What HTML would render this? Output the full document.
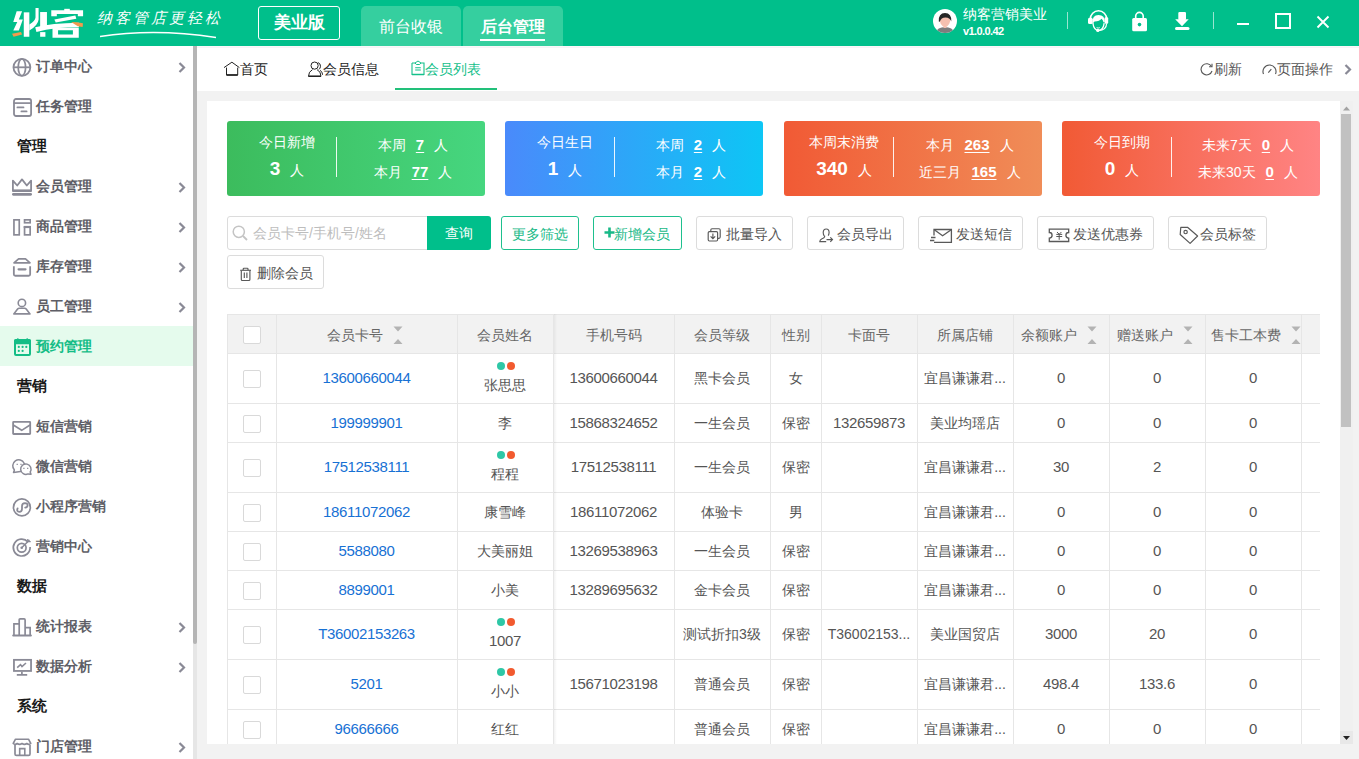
<!DOCTYPE html><html><head><meta charset="utf-8"><style>
*{box-sizing:border-box;margin:0;padding:0}
html,body{width:1359px;height:759px;overflow:hidden;background:#f2f2f2;font-family:"Liberation Sans",sans-serif;}
#root{position:relative;width:1359px;height:759px;overflow:hidden;background:#f2f2f2}
.a{position:absolute;white-space:nowrap}
.hbtn{position:absolute;left:258px;top:6px;width:82px;height:34px;border:1px solid #fff;border-radius:3px;color:#fff;font-weight:bold;font-size:17px;line-height:32px;text-align:center}
.htab{position:absolute;top:6px;height:40px;width:99px;background:#35cf9f;border-radius:5px 5px 0 0;color:#fff;font-size:16px;line-height:42px;text-align:center}
.si{position:absolute;left:0;width:193px;height:40px;font-size:14px;font-weight:bold;color:#5e5e66}
.si .t{position:absolute;left:36px;top:0;line-height:40px}
.si svg.ic{position:absolute;left:12px;top:12px;overflow:visible}
.si svg.chev{position:absolute;left:178px;top:16px}
.sec{position:absolute;left:17px;height:40px;line-height:40px;font-size:15px;font-weight:bold;color:#1a1a1a}
.tb{position:absolute;top:47px;height:45px;line-height:45px;font-size:14px;color:#333;white-space:nowrap}
.card{position:absolute;top:121px;height:75px;width:258px;border-radius:3px;color:#fff;font-size:14px}
.card .dv{position:absolute;left:109px;top:16px;width:1px;height:40px;background:rgba(255,255,255,.9)}
.card .c{position:absolute;white-space:nowrap;line-height:16px}
.card b{font-size:19px}
.card u{font-weight:bold;font-size:15px;text-decoration-thickness:1px;text-underline-offset:2px}
.btn{position:absolute;height:34px;border:1px solid #dcdcdc;border-radius:3px;font-size:14px;color:#555;line-height:32px;white-space:nowrap;background:#fff}
.btn.g{border-color:#1ec08e;color:#18b987}
.btn svg{position:absolute}
.btn span{position:absolute;top:1px}
.th{position:absolute;top:316px;height:38px;line-height:38px;font-size:14px;color:#666;text-align:center;white-space:nowrap}
.td{position:absolute;font-size:14px;color:#555;text-align:center;white-space:nowrap;line-height:16px}
.lnk{color:#1771d4}
.cb{position:absolute;left:243px;width:18px;height:18px;border:1px solid #d9d9d9;border-radius:2px;background:#fff}
.vl{position:absolute;width:1px;background:#e6e6e6}
.hl{position:absolute;height:1px;background:#e6e6e6}
.sort{position:absolute;width:10px;height:19px}
</style></head><body><div id="root"><div class="a" style="left:0;top:0;width:1359px;height:46px;background:#00bf8b"></div><svg class="a" style="left:8px;top:4px" width="84" height="38" viewBox="0 0 1359 615"><g fill="#fff">
<path d="M140 118 L228 118 L175 250 L240 250 L175 430 L85 430 L150 290 L85 290Z"/>
<rect x="255" y="135" width="90" height="395"/>
<rect x="520" y="130" width="110" height="270"/>
<rect x="520" y="455" width="85" height="75"/>
<path d="M445 65 H495 V250 Q485 345 345 430 V330 Q440 280 445 220Z"/>
<path d="M700 100 H1215 V200 H1130 V160 H790 V200 H700Z"/>
<rect x="910" y="78" width="90" height="40"/>
<path d="M750 250 L1090 188 L1105 240 L772 298Z"/>
<path d="M440 378 Q700 312 1150 305 L1150 372 Q760 372 460 452Z"/>
<path fill-rule="evenodd" d="M720 380 H1145 V548 H720Z M810 425 V492 H1050 V425Z"/>
</g><path d="M65 480 L210 455 L228 492 L90 532Z" fill="#f39a4d"/><path d="M1020 292 L1110 296 L1212 312 L1208 372 L1130 362Z" fill="#f39a4d"/></svg><div class="a" style="left:97px;top:8px;font-size:15px;color:#fff;font-family:'Liberation Serif',serif;font-style:italic;letter-spacing:3px;line-height:20px">纳客管店更轻松</div><svg class="a" style="left:95px;top:26px" width="130" height="16"><path d="M5 10.5 Q60 2 121 11.5" stroke="#fff" stroke-width="1.4" fill="none"/></svg><div class="hbtn">美业版</div><div class="htab" style="left:361px;width:100px">前台收银</div><div class="htab" style="left:463px;width:100px;font-weight:bold">后台管理</div><div class="a" style="left:480px;top:39px;width:65px;height:2px;background:#fff"></div><svg class="a" style="left:933px;top:9px" width="24" height="24" viewBox="0 0 24 24">
<defs><clipPath id="av"><circle cx="12" cy="12" r="12"/></clipPath></defs>
<circle cx="12" cy="12" r="12" fill="#fff"/>
<g clip-path="url(#av)"><ellipse cx="12" cy="23.5" rx="8.8" ry="5.5" fill="#7d7d7d"/><path d="M12 16.5 V19" stroke="#f4bcae" stroke-width="3"/><path d="M6.4 8 Q6.4 16.8 12 18.2 Q17.6 16.8 17.6 8 Z" fill="#f6c0b0"/><path d="M5.8 12.5 Q5.3 4 12 4 Q18.7 4 18.3 12.5 Q17.4 8.6 12.5 8.4 Q8 8.4 6.8 12.8 Z" fill="#262626"/></g></svg><div class="a" style="left:963px;top:6px;font-size:14px;color:#fff;line-height:17px">纳客营销美业</div><div class="a" style="left:963px;top:25px;font-size:11px;color:#fff;font-weight:bold;line-height:13px;letter-spacing:-0.6px">v1.0.0.42</div><div class="a" style="left:1067px;top:12px;width:1px;height:17px;background:rgba(255,255,255,.6)"></div><svg class="a" style="left:1088px;top:10px" width="21" height="23" viewBox="0 0 21 23">
<path d="M2.3 9 A8.2 8.2 0 0 1 18.7 9" stroke="#fff" stroke-width="1.6" fill="none"/>
<rect x="0" y="7.7" width="4.7" height="6.4" rx="1.5" fill="#fff"/><rect x="16.6" y="7.2" width="3.6" height="6.5" rx="1.2" fill="#fff"/>
<path d="M4.5 13 Q4 4.9 10.5 4.9 Q17 4.9 16.8 12 L15.6 12.6 Q14.9 9.6 13.6 8.7 Q11.6 11.2 6.6 11.6 Q5.6 12 5.1 14 Z" fill="#fff"/>
<path d="M4.9 13.2 Q5.8 20.3 10.5 20.5 Q15.2 20.3 16.2 13.2" stroke="#fff" stroke-width="1.3" fill="none"/>
<path d="M8.6 17.6 Q10.1 18.6 11.8 17.6" stroke="#fff" stroke-width="0.9" fill="none"/>
<path d="M18.6 13.5 Q18.4 20.2 10.5 20.6" stroke="#fff" stroke-width="1.2" fill="none"/><circle cx="9.8" cy="20.4" r="1.6" fill="#fff"/>
</svg><svg class="a" style="left:1131px;top:11px" width="17" height="21" viewBox="0 0 17 21">
<path d="M4.7 7.5 V5.1 A3.75 3.75 0 0 1 12.2 5.1 V7.5" stroke="#fff" stroke-width="1.6" fill="none"/>
<rect x="1.2" y="7" width="14.8" height="13.2" rx="1.5" fill="#fff"/><circle cx="8.5" cy="13.6" r="1.8" fill="#00bf8b"/></svg><svg class="a" style="left:1174px;top:11px" width="16" height="20" viewBox="0 0 16 20">
<rect x="4.3" y="0.9" width="7.7" height="8" rx="1.2" fill="#fff"/><path d="M1.2 8.3 H14.7 L8 15.2Z" fill="#fff"/>
<rect x="1" y="16" width="14.5" height="3.1" rx="1.5" fill="#fff"/></svg><div class="a" style="left:1213px;top:12px;width:1px;height:17px;background:rgba(255,255,255,.6)"></div><div class="a" style="left:1237px;top:23px;width:12px;height:2px;background:#fff"></div><div class="a" style="left:1275px;top:13px;width:16px;height:16px;border:2px solid #fff"></div><svg class="a" style="left:1316px;top:15px" width="14" height="14" viewBox="0 0 14 14"><path d="M1.5 1.5 L12.5 12.5 M12.5 1.5 L1.5 12.5" stroke="#fff" stroke-width="1.9"/></svg><div class="a" style="left:0;top:46px;width:193px;height:713px;background:#fff"></div><div class="a" style="left:193px;top:46px;width:4px;height:713px;background:#e6e6e6"></div><div class="a" style="left:193px;top:46px;width:4px;height:598px;background:#b5b5b5;border-radius:0 0 2px 2px"></div><div class="si" style="top:46px"><svg class="ic" width="21" height="20" viewBox="0 0 21 20"><circle cx="9.9" cy="9.3" r="8.45" stroke="#8a8a96" stroke-width="1.8" fill="none"/><ellipse cx="9.9" cy="9.3" rx="3.7" ry="8.45" stroke="#8a8a96" stroke-width="1.7" fill="none"/><path d="M1.5 9.3 H18.3" stroke="#8a8a96" stroke-width="1.8"/></svg><span class="t">订单中心</span><svg class="chev" width="8" height="11" viewBox="0 0 8 11"><path d="M1.5 1 L6 5.5 L1.5 10" stroke="#8a8a96" stroke-width="2.2" fill="none"/></svg></div><div class="si" style="top:86px"><svg class="ic" width="21" height="20" viewBox="0 0 21 20"><rect x="2" y="1" width="17.1" height="17" rx="2" stroke="#8a8a96" stroke-width="1.8" fill="none"/><path d="M1.5 5.1 H19.5" stroke="#8a8a96" stroke-width="1.7"/><path d="M5.4 9.4 H11.5 M9.4 13.4 H14.6" stroke="#8a8a96" stroke-width="1.8" stroke-linecap="round"/></svg><span class="t">任务管理</span></div><div class="sec" style="top:126px">管理</div><div class="si" style="top:166px"><svg class="ic" width="21" height="20" viewBox="0 0 21 20"><path d="M0.9 2.6 L5.2 7.5 L10 1.4 L14.8 7.5 L19.1 2.6 V13 H0.9Z" stroke="#8a8a96" stroke-width="1.8" fill="none" stroke-linejoin="round"/><path d="M1 12.6 H19" stroke="#8a8a96" stroke-width="2.4"/><rect x="0" y="15" width="20" height="2.7" rx="1.35" fill="#8a8a96"/></svg><span class="t">会员管理</span><svg class="chev" width="8" height="11" viewBox="0 0 8 11"><path d="M1.5 1 L6 5.5 L1.5 10" stroke="#8a8a96" stroke-width="2.2" fill="none"/></svg></div><div class="si" style="top:206px"><svg class="ic" width="21" height="20" viewBox="0 0 21 20"><rect x="1.95" y="1.85" width="5.3" height="15" stroke="#8a8a96" stroke-width="1.7" fill="none"/><rect x="12.55" y="1.85" width="5.6" height="2.9" stroke="#8a8a96" stroke-width="1.7" fill="none"/><rect x="12.55" y="9.15" width="5.6" height="7.7" stroke="#8a8a96" stroke-width="1.7" fill="none"/><path d="M11.7 9 H19" stroke="#8a8a96" stroke-width="2.2"/></svg><span class="t">商品管理</span><svg class="chev" width="8" height="11" viewBox="0 0 8 11"><path d="M1.5 1 L6 5.5 L1.5 10" stroke="#8a8a96" stroke-width="2.2" fill="none"/></svg></div><div class="si" style="top:246px"><svg class="ic" width="21" height="20" viewBox="0 0 21 20"><path d="M6.6 0.9 H13.5 L18 4.8 H2Z" stroke="#8a8a96" stroke-width="1.7" fill="none" stroke-linejoin="round"/><path d="M1.85 8.3 V16.3 Q1.85 17.75 3.3 17.75 H16.7 Q18.15 17.75 18.15 16.3 V8.3" stroke="#8a8a96" stroke-width="1.8" fill="none"/><path d="M6.6 11.3 H13.5" stroke="#8a8a96" stroke-width="2.2" stroke-linecap="round"/></svg><span class="t">库存管理</span><svg class="chev" width="8" height="11" viewBox="0 0 8 11"><path d="M1.5 1 L6 5.5 L1.5 10" stroke="#8a8a96" stroke-width="2.2" fill="none"/></svg></div><div class="si" style="top:286px"><svg class="ic" width="21" height="20" viewBox="0 0 21 20"><circle cx="9.9" cy="4.9" r="3.7" stroke="#8a8a96" stroke-width="1.6" fill="none"/><path d="M1.8 15.9 L5.6 11 Q6.2 10.3 7.2 10.3 H12.6 Q13.6 10.3 14.2 11 L18 15.9Z" stroke="#8a8a96" stroke-width="1.6" fill="none" stroke-linejoin="round"/></svg><span class="t">员工管理</span><svg class="chev" width="8" height="11" viewBox="0 0 8 11"><path d="M1.5 1 L6 5.5 L1.5 10" stroke="#8a8a96" stroke-width="2.2" fill="none"/></svg></div><div class="si" style="top:326px;background:#e5fbed;color:#14bd86"><svg class="ic" width="21" height="20" viewBox="0 0 21 20"><rect x="3" y="2" width="15" height="15" rx="1" stroke="#14bd86" stroke-width="2" fill="none"/><rect x="2" y="1.3" width="17" height="5" rx="1.5" fill="#14bd86"/><circle cx="5.8" cy="1.2" r="1" fill="#14bd86"/><circle cx="15.2" cy="1.2" r="1" fill="#14bd86"/><g fill="#14bd86"><circle cx="6.8" cy="8.9" r="1.1"/><circle cx="10.6" cy="8.9" r="1.1"/><circle cx="14.3" cy="8.9" r="1.1"/><circle cx="6.8" cy="12.9" r="1.1"/><circle cx="10.6" cy="12.9" r="1.1"/></g></svg><span class="t">预约管理</span></div><div class="sec" style="top:366px">营销</div><div class="si" style="top:406px"><svg class="ic" width="21" height="20" viewBox="0 0 21 20"><rect x="1.1" y="3.9" width="17.1" height="12.1" rx="0.5" stroke="#8a8a96" stroke-width="1.8" fill="none"/><path d="M1.3 7 L9.7 12.3 L18 7" stroke="#8a8a96" stroke-width="1.6" fill="none"/></svg><span class="t">短信营销</span></div><div class="si" style="top:446px"><svg class="ic" width="21" height="20" viewBox="0 0 21 20"><path d="M1.5 14.5 L2.4 12 A6 6 0 1 1 8.5 13.6 Z" stroke="#8a8a96" stroke-width="1.5" fill="none" stroke-linejoin="round"/><path d="M19 16.2 L18.2 14 A5.2 5.2 0 1 0 16 15.9 Z" stroke="#8a8a96" stroke-width="1.5" fill="#fff" stroke-linejoin="round"/><path d="M4.6 6.4 H5.8 M8.4 6.4 H9.6 M11.3 10.3 H12.5 M15.1 10.3 H16.3" stroke="#8a8a96" stroke-width="1.2"/></svg><span class="t">微信营销</span></div><div class="si" style="top:486px"><svg class="ic" width="21" height="20" viewBox="0 0 21 20"><circle cx="9.9" cy="9.4" r="8.45" stroke="#8a8a96" stroke-width="1.7" fill="none"/><path d="M5.6 10.4 Q4.3 13.8 7.3 13.9 Q10 13.9 10 10.8 V8.3 Q10 5.3 13 5.2 Q15.6 5.2 15.6 7.2 Q15.6 9.2 13.2 9.6" stroke="#8a8a96" stroke-width="1.8" fill="none" stroke-linecap="round"/></svg><span class="t">小程序营销</span></div><div class="si" style="top:526px"><svg class="ic" width="21" height="20" viewBox="0 0 21 20"><path d="M16 4 A8.4 8.4 0 1 0 18.1 9" stroke="#8a8a96" stroke-width="1.7" fill="none"/><circle cx="9.7" cy="9.8" r="4.4" stroke="#8a8a96" stroke-width="1.7" fill="none"/><circle cx="9.7" cy="9.8" r="1.3" fill="#8a8a96"/><path d="M9.7 9.8 L17.5 2" stroke="#8a8a96" stroke-width="1.5"/><path d="M15.8 1 V3.7 H18.7" stroke="#8a8a96" stroke-width="1.3" fill="none"/></svg><span class="t">营销中心</span></div><div class="sec" style="top:566px">数据</div><div class="si" style="top:606px"><svg class="ic" width="21" height="20" viewBox="0 0 21 20"><path d="M1.95 17.4 V5.8 H7.2 V17.4 M7.2 17.4 V1.9 Q7.2 0.9 8.2 0.9 H12.1 Q13.1 0.9 13.1 1.9 V17.4 M13.1 9.7 H18.15 V17.4" stroke="#8a8a96" stroke-width="1.7" fill="none"/><path d="M1.2 17.6 H18.9" stroke="#8a8a96" stroke-width="2" stroke-linecap="round"/></svg><span class="t">统计报表</span><svg class="chev" width="8" height="11" viewBox="0 0 8 11"><path d="M1.5 1 L6 5.5 L1.5 10" stroke="#8a8a96" stroke-width="2.2" fill="none"/></svg></div><div class="si" style="top:646px"><svg class="ic" width="21" height="20" viewBox="0 0 21 20"><rect x="1.95" y="1.85" width="17.1" height="11.1" stroke="#8a8a96" stroke-width="1.8" fill="none"/><path d="M9.9 13.8 V16.5 M4.8 16.9 H15.2" stroke="#8a8a96" stroke-width="1.7" fill="none"/><path d="M5.2 9.7 L8.5 6.6 L10 8.5 L14 5" stroke="#8a8a96" stroke-width="1.6" fill="none"/></svg><span class="t">数据分析</span><svg class="chev" width="8" height="11" viewBox="0 0 8 11"><path d="M1.5 1 L6 5.5 L1.5 10" stroke="#8a8a96" stroke-width="2.2" fill="none"/></svg></div><div class="sec" style="top:686px">系统</div><div class="si" style="top:726px"><svg class="ic" width="21" height="20" viewBox="0 0 21 20"><path d="M1.2 5.5 L3.5 1.2 H16.5 L18.8 5.5 Q17 7.2 14.8 5.5 Q12.4 7.2 10 5.5 Q7.6 7.2 5.2 5.5 Q3 7.2 1.2 5.5Z" stroke="#8a8a96" stroke-width="1.6" fill="none" stroke-linejoin="round"/><path d="M3 7 V16 Q3 17.4 4.4 17.4 H16.6 Q18 17.4 18 16 V7" stroke="#8a8a96" stroke-width="1.7" fill="none"/><path d="M7.7 17.4 V10.6 H12.8 V17.4" stroke="#8a8a96" stroke-width="1.6" fill="none"/></svg><span class="t">门店管理</span><svg class="chev" width="8" height="11" viewBox="0 0 8 11"><path d="M1.5 1 L6 5.5 L1.5 10" stroke="#8a8a96" stroke-width="2.2" fill="none"/></svg></div><div class="a" style="left:197px;top:46px;width:10px;height:713px;background:#f2f2f2"></div><div class="a" style="left:197px;top:46px;width:1162px;height:45px;background:#fff"></div><div class="a" style="left:197px;top:46px;width:1162px;height:2px;background:linear-gradient(#fcf8fb,#f4f4f4)"></div><svg class="a" style="left:223px;top:61px" width="17" height="16" viewBox="0 0 17 16" fill="none" stroke="#222" stroke-width="1"><path d="M1 6.6 L8.9 1.2 L16.4 6.6"/><path d="M3.5 6.6 V14 H14.7 V6.6"/><path d="M3.5 14 H14.7" stroke-width="1.6"/></svg><div class="tb" style="left:240px;color:#222">首页</div><svg class="a" style="left:307px;top:61px" width="17" height="16" viewBox="0 0 17 16" fill="none" stroke="#222" stroke-width="1"><circle cx="7.6" cy="4.6" r="3.6"/><path d="M5.5 8.6 Q1.5 10.6 1.5 15.3 H14 Q14 10.6 10 8.6"/><path d="M15.6 13.8 Q15.6 10.8 13 9.3 M11 1.6 Q13.5 2.3 13.5 5.3 Q13.3 7.5 11.8 8.5"/><path d="M1.5 15.3 H14" stroke-width="1.5"/></svg><div class="tb" style="left:323px;color:#222">会员信息</div><svg class="a" style="left:411px;top:60px" width="14" height="16" viewBox="0 0 14 16" fill="none" stroke="#14c08a" stroke-width="1.1"><path d="M1 3 V14.5 H13 V3 H10 M4 3 H1"/><path d="M4 3 L7 1 L10 3 L8.6 4.5 H5.4Z" stroke-width="1"/><path d="M4.2 7.8 H9.8 M4.2 10 H9.8"/><path d="M1 14.5 H13" stroke-width="1.5"/></svg><div class="tb" style="left:425px;color:#14c08a">会员列表</div><div class="a" style="left:395px;top:88px;width:102px;height:2px;background:#22c07a"></div><svg class="a" style="left:1200px;top:63px" width="14" height="13" viewBox="0 0 14 13"><path d="M11.5 3.5 A5.6 5.6 0 1 0 12 8" stroke="#555" stroke-width="1.1" fill="none"/><path d="M9 3.8 H12 V0.8" stroke="#555" stroke-width="1.1" fill="none"/></svg><div class="tb" style="left:1214px;color:#555">刷新</div><svg class="a" style="left:1262px;top:62px" width="15" height="14" viewBox="0 0 15 14" fill="none" stroke="#555" stroke-width="1.1"><path d="M1.5 12 A6.5 6.5 0 1 1 13.5 12"/><path d="M6.3 10.6 L9.3 7.2"/></svg><div class="tb" style="left:1277px;color:#555">页面操作</div><svg class="a" style="left:1344px;top:64px" width="8" height="11" viewBox="0 0 8 11"><path d="M1.5 1 L6 5.5 L1.5 10" stroke="#8a8a96" stroke-width="2.2" fill="none"/></svg><div class="a" style="left:207px;top:101px;width:1133px;height:643px;background:#fff"></div><div class="a" style="left:1340px;top:101px;width:13px;height:643px;background:#f0f0f0"></div><div class="a" style="left:1341px;top:114px;width:10px;height:313px;background:#c1c1c1"></div><svg class="a" style="left:1340px;top:101px" width="13" height="13"><path d="M3 9.5 L6.5 5.5 L10 9.5Z" fill="#a3a3a3"/></svg><div class="a" style="left:1340px;top:731px;width:13px;height:13px;background:#e8e8e8"></div><svg class="a" style="left:1340px;top:731px" width="13" height="13"><path d="M3 5 L6.5 9 L10 5Z" fill="#222"/></svg><div class="card" style="left:227px;background:linear-gradient(90deg,#3cbc5d,#46d67f)"><div class="c" style="left:0;width:120px;text-align:center;top:13px">今日新增</div><div class="c" style="left:0;width:120px;text-align:center;top:38px;line-height:20px"><b>3</b><span style="margin-left:10px">人</span></div><div class="dv"></div><div class="c" style="left:110px;width:152px;text-align:center;top:16px">本周<u style="margin-left:10px">7</u><span style="margin-left:10px">人</span></div><div class="c" style="left:110px;width:152px;text-align:center;top:43px">本月<u style="margin-left:10px">77</u><span style="margin-left:10px">人</span></div></div><div class="card" style="left:505px;background:linear-gradient(90deg,#4a8afb,#0dc6f5)"><div class="c" style="left:0;width:120px;text-align:center;top:13px">今日生日</div><div class="c" style="left:0;width:120px;text-align:center;top:38px;line-height:20px"><b>1</b><span style="margin-left:10px">人</span></div><div class="dv"></div><div class="c" style="left:110px;width:152px;text-align:center;top:16px">本周<u style="margin-left:10px">2</u><span style="margin-left:10px">人</span></div><div class="c" style="left:110px;width:152px;text-align:center;top:43px">本月<u style="margin-left:10px">2</u><span style="margin-left:10px">人</span></div></div><div class="card" style="left:784px;background:linear-gradient(90deg,#f15a35,#f08d58)"><div class="c" style="left:0;width:120px;text-align:center;top:13px">本周末消费</div><div class="c" style="left:0;width:120px;text-align:center;top:38px;line-height:20px"><b>340</b><span style="margin-left:10px">人</span></div><div class="dv"></div><div class="c" style="left:110px;width:152px;text-align:center;top:16px">本月<u style="margin-left:10px">263</u><span style="margin-left:10px">人</span></div><div class="c" style="left:110px;width:152px;text-align:center;top:43px">近三月<u style="margin-left:10px">165</u><span style="margin-left:10px">人</span></div></div><div class="card" style="left:1062px;background:linear-gradient(90deg,#f15a35,#ff8484)"><div class="c" style="left:0;width:120px;text-align:center;top:13px">今日到期</div><div class="c" style="left:0;width:120px;text-align:center;top:38px;line-height:20px"><b>0</b><span style="margin-left:10px">人</span></div><div class="dv"></div><div class="c" style="left:110px;width:152px;text-align:center;top:16px">未来7天<u style="margin-left:10px">0</u><span style="margin-left:10px">人</span></div><div class="c" style="left:110px;width:152px;text-align:center;top:43px">未来30天<u style="margin-left:10px">0</u><span style="margin-left:10px">人</span></div></div><div class="a" style="left:227px;top:216px;width:201px;height:34px;border:1px solid #dcdcdc;border-radius:3px 0 0 3px"></div><svg class="a" style="left:232px;top:225px" width="16" height="16" viewBox="0 0 16 16"><circle cx="6.8" cy="6.8" r="5.6" stroke="#c4c4c4" stroke-width="1.5" fill="none"/><path d="M11 11 L15 15" stroke="#c4c4c4" stroke-width="1.8"/></svg><div class="a" style="left:253px;top:216px;line-height:34px;font-size:14px;color:#bdbdbd">会员卡号/手机号/姓名</div><div class="a" style="left:427px;top:216px;width:64px;height:34px;background:#00bf8b;border-radius:0 3px 3px 0;color:#fff;font-size:14px;line-height:34px;text-align:center">查询</div><div class="btn g" style="left:501px;top:216px;width:78px"><span style="left:10px">更多筛选</span></div><div class="btn g" style="left:593px;top:216px;width:89px"><svg style="left:10px;top:10px" width="11" height="11"><path d="M5.5 0.5 V10.5 M0.5 5.5 H10.5" stroke="#18b987" stroke-width="2.6"/></svg><span style="left:20px">新增会员</span></div><div class="btn " style="left:696px;top:216px;width:97px"><svg style="left:10px;top:10px" width="16" height="16" viewBox="0 0 16 16" fill="none" stroke="#595959" stroke-width="1.15"><rect x="3.8" y="1.7" width="9.4" height="9.6" rx="1.2"/><rect x="1.2" y="4.6" width="9.4" height="9.4" rx="1.2" fill="#fff"/><path d="M5.9 6.4 V11.6 M3.6 9.3 L5.9 11.6 L8.2 9.3"/></svg><span style="left:29px">批量导入</span></div><div class="btn " style="left:807px;top:216px;width:97px"><svg style="left:10px;top:11px" width="16" height="16" viewBox="0 0 16 16" fill="none" stroke="#595959" stroke-width="1.15"><path d="M6.3 7.8 Q5.2 6.5 5.2 4.5 Q5.3 1 8.2 1 Q11.1 1 11.1 4.5 Q11 6.5 10.2 7.6"/><path d="M6.6 7.8 V8.8 Q6.3 10 4 10.8 Q1.8 11.8 1.8 13.6 H8.2"/><path d="M8.5 11.6 H14.5 M12.3 9.3 L14.5 11.6 L12.3 13.9"/></svg><span style="left:29px">会员导出</span></div><div class="btn " style="left:918px;top:216px;width:105px"><svg style="left:10px;top:11px" width="24" height="16" viewBox="0 0 24 16" fill="none" stroke="#595959" stroke-width="1.15"><path d="M5 7.5 V1.5 H22.4 V14.3 H5" stroke-width="1.3"/><path d="M5.3 1.7 L13.6 7.8 L22.2 1.7" stroke-width="1.3"/><path d="M2 9.5 H6.5 M1 12.5 H5.3" stroke-width="1.3"/></svg><span style="left:37px">发送短信</span></div><div class="btn " style="left:1037px;top:216px;width:117px"><svg style="left:10px;top:11px" width="22" height="16" viewBox="0 0 22 16" fill="none" stroke="#595959" stroke-width="1.15"><path d="M1.3 1.2 H20.7 V4.5 A2.8 2.8 0 0 0 20.7 10.1 V13.5 H1.3 V10.1 A2.8 2.8 0 0 0 1.3 4.5 Z" stroke-width="1.3"/><path d="M9 4 L11.2 6.3 L13.4 4 M8.3 6.4 H14.2 M8.3 8.5 H14.2 M11.2 6.4 V11.8" stroke-width="1"/></svg><span style="left:35px">发送优惠券</span></div><div class="btn " style="left:1168px;top:216px;width:99px"><svg style="left:10px;top:8px" width="20" height="20" viewBox="0 0 20 20" fill="none" stroke="#595959" stroke-width="1.15"><path d="M1.8 2.3 H8.5 L18.6 11 L11.1 18.4 L1.2 9.5 Z" stroke-width="1.2" stroke-linejoin="round"/><circle cx="6.6" cy="7" r="1.7"/></svg><span style="left:31px">会员标签</span></div><div class="btn " style="left:227px;top:255px;width:97px"><svg style="left:11px;top:11px" width="14" height="16" viewBox="0 0 14 16" fill="none" stroke="#595959" stroke-width="1.15"><path d="M1.2 3.3 H12"/><path d="M4.2 3 V2 Q4.2 1.2 5 1.2 H8.2 Q9 1.2 9 2 V3"/><path d="M2.3 3.8 V12.5 Q2.3 13.5 3.3 13.5 H9.9 Q10.9 13.5 10.9 12.5 V3.8"/><path d="M5.3 5.5 V11 M7.9 5.5 V11"/></svg><span style="left:29px">删除会员</span></div><div class="a" style="left:227px;top:314px;width:1093px;height:40px;background:#f2f2f2"></div><div class="hl" style="left:227px;top:314px;width:1093px"></div><div class="hl" style="left:227px;top:353px;width:1093px"></div><div class="hl" style="left:227px;top:403px;width:1093px"></div><div class="hl" style="left:227px;top:442px;width:1093px"></div><div class="hl" style="left:227px;top:492px;width:1093px"></div><div class="hl" style="left:227px;top:531px;width:1093px"></div><div class="hl" style="left:227px;top:570px;width:1093px"></div><div class="hl" style="left:227px;top:609px;width:1093px"></div><div class="hl" style="left:227px;top:659px;width:1093px"></div><div class="hl" style="left:227px;top:709px;width:1093px"></div><div class="vl" style="left:227px;top:314px;height:430px"></div><div class="vl" style="left:276px;top:314px;height:430px"></div><div class="vl" style="left:457px;top:314px;height:430px"></div><div class="vl" style="left:553px;top:314px;height:430px"></div><div class="vl" style="left:674px;top:314px;height:430px"></div><div class="vl" style="left:770px;top:314px;height:430px"></div><div class="vl" style="left:821px;top:314px;height:430px"></div><div class="vl" style="left:917px;top:314px;height:430px"></div><div class="vl" style="left:1013px;top:314px;height:430px"></div><div class="vl" style="left:1109px;top:314px;height:430px"></div><div class="vl" style="left:1205px;top:314px;height:430px"></div><div class="vl" style="left:1301px;top:314px;height:430px"></div><div class="a" style="left:554px;top:314px;width:3px;height:430px;background:linear-gradient(90deg,rgba(0,0,0,.05),rgba(0,0,0,0))"></div><div class="cb" style="top:326px"></div><div class="th" style="left:327px">会员卡号</div><svg class="sort" style="left:393px;top:326px" width="10" height="19" viewBox="0 0 10 19"><path d="M0.5 0.5 H9.5 L5 5.5Z M0.5 18 H9.5 L5 13Z" fill="#b3b3b3"/></svg><div class="th" style="left:457px;width:96px">会员姓名</div><div class="th" style="left:553px;width:121px">手机号码</div><div class="th" style="left:674px;width:96px">会员等级</div><div class="th" style="left:770px;width:51px">性别</div><div class="th" style="left:821px;width:96px">卡面号</div><div class="th" style="left:917px;width:96px">所属店铺</div><div class="th" style="left:1021px">余额账户</div><svg class="sort" style="left:1087px;top:326px" width="10" height="19" viewBox="0 0 10 19"><path d="M0.5 0.5 H9.5 L5 5.5Z M0.5 18 H9.5 L5 13Z" fill="#b3b3b3"/></svg><div class="th" style="left:1117px">赠送账户</div><svg class="sort" style="left:1183px;top:326px" width="10" height="19" viewBox="0 0 10 19"><path d="M0.5 0.5 H9.5 L5 5.5Z M0.5 18 H9.5 L5 13Z" fill="#b3b3b3"/></svg><div class="th" style="left:1211px">售卡工本费</div><svg class="sort" style="left:1291px;top:326px" width="10" height="19" viewBox="0 0 10 19"><path d="M0.5 0.5 H9.5 L5 5.5Z M0.5 18 H9.5 L5 13Z" fill="#b3b3b3"/></svg><div class="cb" style="top:370px"></div><div class="td lnk" style="left:276px;width:181px;top:370px;font-size:15px;letter-spacing:-0.35px">13600660044</div><div class="a" style="left:497px;top:362px;width:8px;height:8px;border-radius:50%;background:#2ec7a6"></div><div class="a" style="left:507px;top:362px;width:8px;height:8px;border-radius:50%;background:#f25a2f"></div><div class="td" style="left:457px;width:96px;top:377px">张思思</div><div class="td" style="left:553px;width:121px;top:370px;font-size:15px;letter-spacing:-0.35px">13600660044</div><div class="td" style="left:674px;width:96px;top:370px">黑卡会员</div><div class="td" style="left:770px;width:51px;top:370px">女</div><div class="td" style="left:917px;width:96px;top:370px">宜昌谦谦君...</div><div class="td" style="left:1013px;width:96px;top:370px;font-size:15px;letter-spacing:-0.35px">0</div><div class="td" style="left:1109px;width:96px;top:370px;font-size:15px;letter-spacing:-0.35px">0</div><div class="td" style="left:1205px;width:96px;top:370px;font-size:15px;letter-spacing:-0.35px">0</div><div class="cb" style="top:415px"></div><div class="td lnk" style="left:276px;width:181px;top:415px;font-size:15px;letter-spacing:-0.35px">199999901</div><div class="td" style="left:457px;width:96px;top:415px">李</div><div class="td" style="left:553px;width:121px;top:415px;font-size:15px;letter-spacing:-0.35px">15868324652</div><div class="td" style="left:674px;width:96px;top:415px">一生会员</div><div class="td" style="left:770px;width:51px;top:415px">保密</div><div class="td" style="left:821px;width:96px;top:415px;font-size:15px;letter-spacing:-0.35px">132659873</div><div class="td" style="left:917px;width:96px;top:415px">美业均瑶店</div><div class="td" style="left:1013px;width:96px;top:415px;font-size:15px;letter-spacing:-0.35px">0</div><div class="td" style="left:1109px;width:96px;top:415px;font-size:15px;letter-spacing:-0.35px">0</div><div class="td" style="left:1205px;width:96px;top:415px;font-size:15px;letter-spacing:-0.35px">0</div><div class="cb" style="top:459px"></div><div class="td lnk" style="left:276px;width:181px;top:459px;font-size:15px;letter-spacing:-0.35px">17512538111</div><div class="a" style="left:497px;top:451px;width:8px;height:8px;border-radius:50%;background:#2ec7a6"></div><div class="a" style="left:507px;top:451px;width:8px;height:8px;border-radius:50%;background:#f25a2f"></div><div class="td" style="left:457px;width:96px;top:466px">程程</div><div class="td" style="left:553px;width:121px;top:459px;font-size:15px;letter-spacing:-0.35px">17512538111</div><div class="td" style="left:674px;width:96px;top:459px">一生会员</div><div class="td" style="left:770px;width:51px;top:459px">保密</div><div class="td" style="left:917px;width:96px;top:459px">宜昌谦谦君...</div><div class="td" style="left:1013px;width:96px;top:459px;font-size:15px;letter-spacing:-0.35px">30</div><div class="td" style="left:1109px;width:96px;top:459px;font-size:15px;letter-spacing:-0.35px">2</div><div class="td" style="left:1205px;width:96px;top:459px;font-size:15px;letter-spacing:-0.35px">0</div><div class="cb" style="top:504px"></div><div class="td lnk" style="left:276px;width:181px;top:504px;font-size:15px;letter-spacing:-0.35px">18611072062</div><div class="td" style="left:457px;width:96px;top:504px">康雪峰</div><div class="td" style="left:553px;width:121px;top:504px;font-size:15px;letter-spacing:-0.35px">18611072062</div><div class="td" style="left:674px;width:96px;top:504px">体验卡</div><div class="td" style="left:770px;width:51px;top:504px">男</div><div class="td" style="left:917px;width:96px;top:504px">宜昌谦谦君...</div><div class="td" style="left:1013px;width:96px;top:504px;font-size:15px;letter-spacing:-0.35px">0</div><div class="td" style="left:1109px;width:96px;top:504px;font-size:15px;letter-spacing:-0.35px">0</div><div class="td" style="left:1205px;width:96px;top:504px;font-size:15px;letter-spacing:-0.35px">0</div><div class="cb" style="top:543px"></div><div class="td lnk" style="left:276px;width:181px;top:543px;font-size:15px;letter-spacing:-0.35px">5588080</div><div class="td" style="left:457px;width:96px;top:543px">大美丽姐</div><div class="td" style="left:553px;width:121px;top:543px;font-size:15px;letter-spacing:-0.35px">13269538963</div><div class="td" style="left:674px;width:96px;top:543px">一生会员</div><div class="td" style="left:770px;width:51px;top:543px">保密</div><div class="td" style="left:917px;width:96px;top:543px">宜昌谦谦君...</div><div class="td" style="left:1013px;width:96px;top:543px;font-size:15px;letter-spacing:-0.35px">0</div><div class="td" style="left:1109px;width:96px;top:543px;font-size:15px;letter-spacing:-0.35px">0</div><div class="td" style="left:1205px;width:96px;top:543px;font-size:15px;letter-spacing:-0.35px">0</div><div class="cb" style="top:582px"></div><div class="td lnk" style="left:276px;width:181px;top:582px;font-size:15px;letter-spacing:-0.35px">8899001</div><div class="td" style="left:457px;width:96px;top:582px">小美</div><div class="td" style="left:553px;width:121px;top:582px;font-size:15px;letter-spacing:-0.35px">13289695632</div><div class="td" style="left:674px;width:96px;top:582px">金卡会员</div><div class="td" style="left:770px;width:51px;top:582px">保密</div><div class="td" style="left:917px;width:96px;top:582px">宜昌谦谦君...</div><div class="td" style="left:1013px;width:96px;top:582px;font-size:15px;letter-spacing:-0.35px">0</div><div class="td" style="left:1109px;width:96px;top:582px;font-size:15px;letter-spacing:-0.35px">0</div><div class="td" style="left:1205px;width:96px;top:582px;font-size:15px;letter-spacing:-0.35px">0</div><div class="cb" style="top:626px"></div><div class="td lnk" style="left:276px;width:181px;top:626px;font-size:15px;letter-spacing:-0.35px">T36002153263</div><div class="a" style="left:497px;top:618px;width:8px;height:8px;border-radius:50%;background:#2ec7a6"></div><div class="a" style="left:507px;top:618px;width:8px;height:8px;border-radius:50%;background:#f25a2f"></div><div class="td" style="left:457px;width:96px;top:633px;font-size:15px;letter-spacing:-0.35px">1007</div><div class="td" style="left:674px;width:96px;top:626px">测试折扣3级</div><div class="td" style="left:770px;width:51px;top:626px">保密</div><div class="td" style="left:821px;width:96px;top:626px">T36002153...</div><div class="td" style="left:917px;width:96px;top:626px">美业国贸店</div><div class="td" style="left:1013px;width:96px;top:626px;font-size:15px;letter-spacing:-0.35px">3000</div><div class="td" style="left:1109px;width:96px;top:626px;font-size:15px;letter-spacing:-0.35px">20</div><div class="td" style="left:1205px;width:96px;top:626px;font-size:15px;letter-spacing:-0.35px">0</div><div class="cb" style="top:676px"></div><div class="td lnk" style="left:276px;width:181px;top:676px;font-size:15px;letter-spacing:-0.35px">5201</div><div class="a" style="left:497px;top:668px;width:8px;height:8px;border-radius:50%;background:#2ec7a6"></div><div class="a" style="left:507px;top:668px;width:8px;height:8px;border-radius:50%;background:#f25a2f"></div><div class="td" style="left:457px;width:96px;top:683px">小小</div><div class="td" style="left:553px;width:121px;top:676px;font-size:15px;letter-spacing:-0.35px">15671023198</div><div class="td" style="left:674px;width:96px;top:676px">普通会员</div><div class="td" style="left:770px;width:51px;top:676px">保密</div><div class="td" style="left:917px;width:96px;top:676px">宜昌谦谦君...</div><div class="td" style="left:1013px;width:96px;top:676px;font-size:15px;letter-spacing:-0.35px">498.4</div><div class="td" style="left:1109px;width:96px;top:676px;font-size:15px;letter-spacing:-0.35px">133.6</div><div class="td" style="left:1205px;width:96px;top:676px;font-size:15px;letter-spacing:-0.35px">0</div><div class="cb" style="top:721px"></div><div class="td lnk" style="left:276px;width:181px;top:721px;font-size:15px;letter-spacing:-0.35px">96666666</div><div class="td" style="left:457px;width:96px;top:721px">红红</div><div class="td" style="left:674px;width:96px;top:721px">普通会员</div><div class="td" style="left:770px;width:51px;top:721px">保密</div><div class="td" style="left:917px;width:96px;top:721px">宜昌谦谦君...</div><div class="td" style="left:1013px;width:96px;top:721px;font-size:15px;letter-spacing:-0.35px">0</div><div class="td" style="left:1109px;width:96px;top:721px;font-size:15px;letter-spacing:-0.35px">0</div><div class="td" style="left:1205px;width:96px;top:721px;font-size:15px;letter-spacing:-0.35px">0</div><div class="a" style="left:207px;top:744px;width:1152px;height:15px;background:#f2f2f2"></div><div class="a" style="left:1320px;top:101px;width:20px;height:643px;background:transparent"></div></div></body></html>
